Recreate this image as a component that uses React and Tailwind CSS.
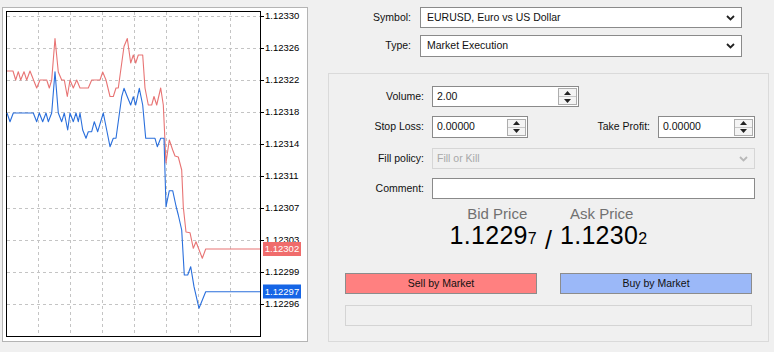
import React from 'react';

// ------------------------------------------------------------
// Chart data (page coordinates inside the chart panel)
// ------------------------------------------------------------
const ASK_LINE =
  '7,71 13,71 15.7,80 18.3,71.7 20.7,80 24,71.7 26.7,80 30,71 36.7,88 40,80 46.7,80 49.3,88 51.7,80 55,38.5 58.3,72 61.7,80 64.3,80 67.3,96.5 70,80 73.3,88 76.7,80 80,88 88.3,88 91.7,80 100,80 102.7,72 106,80 110,96.5 113.3,96.5 116,88 118.3,88 124,46.5 127.3,38.5 130.7,63 133.3,55 135.7,63 138.3,55 142.7,55 145,88 148.3,105 151.7,105 154,96.5 156.7,105 160.7,88 163.3,105 166,163 169.3,140 172.7,150 175,156 178.3,157 181.7,170 183.3,207 186,232 190,232.7 193.3,248.3 196,241.7 202.3,258.3 205.7,249 260,249';

const BID_LINE =
  '7,113 10,121.7 13.3,113 33.3,113 36.7,121.7 39.3,113 42.7,121.7 46,113 48.3,121.7 51.7,113 55,71.7 58.3,113 61.7,121.7 64.3,113 67.7,130 70,113 73.3,121.7 76,113 78.3,121.7 80,113 82.7,130 86,138.3 88.3,131.7 91.7,131.7 94.3,121.7 97.7,131.7 103.3,113 106.7,130 110,146.7 113.3,138.3 116,138.3 121.7,96.7 124,88.3 127.3,96.7 130.7,105 133.3,96.7 135.7,105 139.3,88.3 142.7,105 145.7,138.3 155,138.3 157.3,146.7 160.7,138.3 164,138.3 166,206.7 169.3,190.7 172.7,190.7 176,206 178.3,215 181.7,230 184.3,275 187.7,275 190.7,266.7 194,286.7 199,308.3 205.7,291.7 260,291.7';

const LEVELS = ['1.12330', '1.12326', '1.12322', '1.12318', '1.12314', '1.12311', '1.12307', '1.12303', '1.12299', '1.12296'];
const COLS = [38.5, 70.5, 102.5, 134.5, 166.5, 198.5, 230.5];

function TickChart() {
  return (
    <div className="ml-[2px] mt-[7px] w-[306px] h-[335px] border border-[#b4b4b4] bg-white">
      <svg width="304" height="333" viewBox="3 8 304 333" className="block">
        <defs>
          <clipPath id="aboveTag">
            <rect x="260" y="230" width="50" height="12" />
          </clipPath>
        </defs>
        {LEVELS.map((_, i) => (
          <line key={'h' + i} x1="7" x2="260" y1={16.5 + 32 * i} y2={16.5 + 32 * i}
            stroke="#c4c4c4" strokeWidth="1" strokeDasharray="3 3" />
        ))}
        {COLS.map((x) => (
          <line key={'v' + x} x1={x} x2={x} y1="12" y2="336" stroke="#c4c4c4" strokeWidth="1" strokeDasharray="3 3" />
        ))}
        <rect x="6.5" y="11.5" width="254" height="325" fill="none" stroke="#000" strokeWidth="1" />
        {LEVELS.map((lvl, i) => (
          <g key={lvl}>
            <line x1="260" x2="264" y1={16.5 + 32 * i} y2={16.5 + 32 * i} stroke="#000" strokeWidth="1" />
            <text x="265" y={16.5 + 32 * i} dominantBaseline="middle" fontSize="9.5"
              clipPath={lvl === '1.12303' ? 'url(#aboveTag)' : undefined}
              fontFamily="'Liberation Sans', Arial, sans-serif" fill="#000">{lvl}</text>
          </g>
        ))}
        <polyline points={ASK_LINE} fill="none" stroke="#e87474" strokeWidth="1.1" strokeLinejoin="round" />
        <polyline points={BID_LINE} fill="none" stroke="#2a6fdc" strokeWidth="1.1" strokeLinejoin="round" />
        {/* current price tags */}
        <rect x="263" y="242" width="38" height="14" fill="#f06c6c" />
        <text x="282" y="249.5" textAnchor="middle" dominantBaseline="middle" fontSize="9.5"
          fontFamily="'Liberation Sans', Arial, sans-serif" fill="#fff">1.12302</text>
        <rect x="263" y="284.5" width="38" height="14" fill="#1565e6" />
        <text x="282" y="292" textAnchor="middle" dominantBaseline="middle" fontSize="9.5"
          fontFamily="'Liberation Sans', Arial, sans-serif" fill="#fff">1.12297</text>
      </svg>
    </div>
  );
}

// ------------------------------------------------------------
// Form controls
// ------------------------------------------------------------
function Chevron({ color = '#222' }) {
  return (
    <svg width="9" height="6" viewBox="0 0 9 6" className="shrink-0">
      <path d="M1 1 L4.5 4.5 L8 1" fill="none" stroke={color} strokeWidth="1.8" />
    </svg>
  );
}

function Select({ value, className = '', disabled = false }) {
  return (
    <div
      className={`flex items-center justify-between pl-[6px] pr-[6px] border ${
        disabled ? 'border-[#d6d6d6] bg-[#f0f0f0] text-[#a8a8a8]' : 'border-[#8a8a8a] bg-white text-[#111]'
      } ${className}`}
    >
      <span>{value}</span>
      <Chevron color={disabled ? '#b8b8b8' : '#222'} />
    </div>
  );
}

function Spinner() {
  return (
    <div className="w-[19px] h-[17px] border border-[#adadad] bg-[#f4f4f4] flex flex-col">
      <div className="flex-1 flex items-center justify-center border-b border-[#c8c8c8]">
        <svg width="7" height="4" viewBox="0 0 7 4"><path d="M0 4 L3.5 0 L7 4 Z" fill="#222" /></svg>
      </div>
      <div className="flex-1 flex items-center justify-center">
        <svg width="7" height="4" viewBox="0 0 7 4"><path d="M0 0 L3.5 4 L7 0 Z" fill="#222" /></svg>
      </div>
    </div>
  );
}

function NumberInput({ value, className = '' }) {
  return (
    <div className={`flex items-center justify-between pl-[4px] pr-[1px] border border-[#8a8a8a] bg-white ${className}`}>
      <span>{value}</span>
      <Spinner />
    </div>
  );
}

function Label({ children, className = 'w-[95px]' }) {
  return <div className={`${className} text-right shrink-0`}>{children}</div>;
}

// ------------------------------------------------------------
// Order panel
// ------------------------------------------------------------
function OrderPanel() {
  return (
    <div className="ml-[20px] w-[441px] text-[10.5px] text-[#111] font-['Liberation_Sans',Arial,sans-serif]">
      <div className="mt-[7px] flex items-center">
        <Label className="w-[83px]">Symbol:</Label>
        <Select value="EURUSD, Euro vs US Dollar" className="ml-[9px] w-[322px] h-[21px]" />
      </div>
      <div className="mt-[7px] flex items-center">
        <Label className="w-[83px]">Type:</Label>
        <Select value="Market Execution" className="ml-[9px] w-[322px] h-[22px]" />
      </div>

      <div className="mt-[16px] h-[269px] border border-[#dadada] pt-[12px]">
        <div className="flex items-center">
          <Label>Volume:</Label>
          <NumberInput value="2.00" className="ml-[8px] w-[147px] h-[21px]" />
        </div>
        <div className="mt-[9px] flex items-center">
          <Label>Stop Loss:</Label>
          <NumberInput value="0.00000" className="ml-[8px] w-[96px] h-[22px]" />
          <Label className="w-[122px]">Take Profit:</Label>
          <NumberInput value="0.00000" className="ml-[8px] w-[97px] h-[22px]" />
        </div>
        <div className="mt-[10px] flex items-center">
          <Label>Fill policy:</Label>
          <Select value="Fill or Kill" disabled className="ml-[8px] w-[323px] h-[21px] !pl-[4px]" />
        </div>
        <div className="mt-[9px] flex items-center">
          <Label>Comment:</Label>
          <div className="ml-[8px] w-[323px] h-[21px] border border-[#8a8a8a] bg-white" />
        </div>

        <div className="mt-[6px] flex justify-center items-end font-['Liberation_Sans',Arial,sans-serif] text-[#000]">
          <div className="flex flex-col items-center">
            <div className="text-[15px] leading-[17px] text-[#707070] pl-[8px]">Bid Price</div>
            <div className="leading-[26px] tracking-[0.3px]">
              <span className="text-[25px]">1.1229</span>
              <span className="text-[16px]">7</span>
            </div>
          </div>
          <div className="text-[25px] leading-[26px] mx-[8px] font-light">/</div>
          <div className="flex flex-col items-center">
            <div className="text-[15px] leading-[17px] text-[#707070] pr-[4px]">Ask Price</div>
            <div className="leading-[26px] tracking-[0.3px]">
              <span className="text-[25px]">1.1230</span>
              <span className="text-[16px]">2</span>
            </div>
          </div>
        </div>

        <div className="mt-[20px] px-[16px] flex justify-between">
          <button className="w-[192px] h-[21px] bg-[#ff8080] border border-[#8c8c8c] text-[#111] text-[10.5px]">
            Sell by Market
          </button>
          <button className="w-[192px] h-[21px] bg-[#9bb8f8] border border-[#8c8c8c] text-[#111] text-[10.5px]">
            Buy by Market
          </button>
        </div>
        <div className="mt-[11px] mx-[16px] h-[21px] border border-[#d4d4d4] bg-[#f0f0f0]" />
      </div>
    </div>
  );
}

export default function App() {
  return (
    <div className="w-[774px] h-[352px] bg-[#f0f0f0] flex items-start overflow-hidden">
      <TickChart />
      <OrderPanel />
    </div>
  );
}
